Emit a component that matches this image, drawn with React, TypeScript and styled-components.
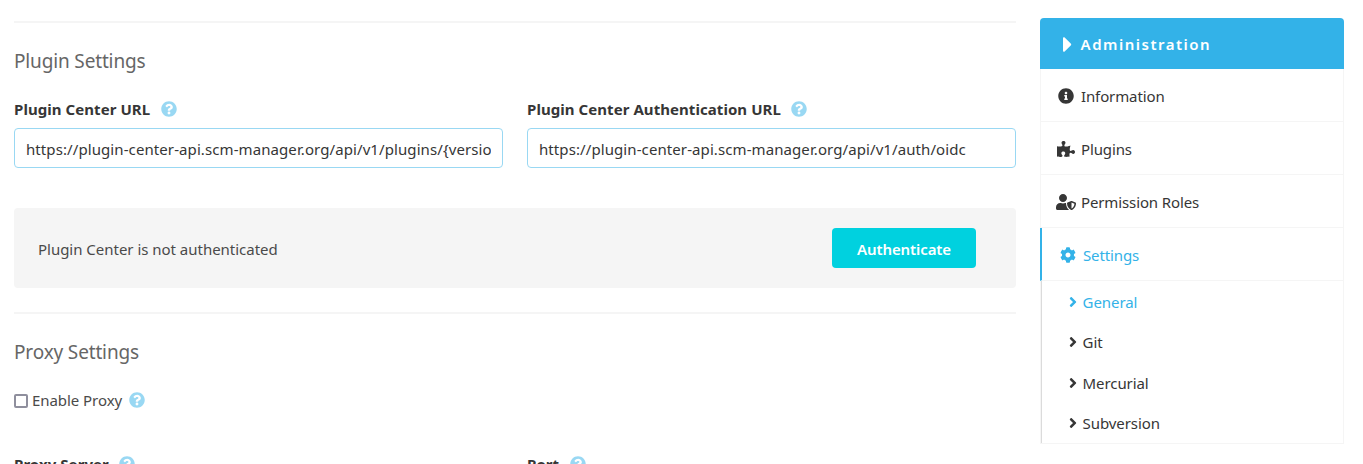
import React from "react";
import styled, { createGlobalStyle } from "styled-components";
import {
  FaAngleRight,
  FaCaretRight,
  FaCog,
  FaInfoCircle,
  FaPuzzlePiece,
  FaQuestionCircle,
  FaUserShield,
} from "react-icons/fa";

const GlobalStyle = createGlobalStyle`
  * { box-sizing: border-box; }
  body {
    margin: 0;
    background: #fff;
    color: #363636;
    font-family: "Noto Sans", "Open Sans", sans-serif;
    font-size: 15px;
    line-height: 24px;
    overflow: hidden;
  }
`;

const Page = styled.div`
  display: grid;
  grid-template-columns: 1002px 304px;
  column-gap: 24px;
  height: 464px;
  padding-left: 14px;
  overflow: hidden;
`;

const Main = styled.main`
  padding-top: 21px;
  white-space: nowrap;
`;

const Divider = styled.hr`
  height: 2px;
  margin: 0;
  border: 0;
  background: #f5f5f5;
`;

const Heading = styled.h3`
  margin: 0;
  padding-top: 23px;
  color: #666;
  font-size: 19px;
  font-weight: 400;
  line-height: 30px;
  letter-spacing: -0.15px;
`;

const Columns = styled.div<{ $top: number }>`
  display: grid;
  grid-template-columns: 1fr 1fr;
  column-gap: 24px;
  margin-top: ${(p) => p.$top}px;
`;

const Field = styled.div`
  min-width: 0;
`;

const Label = styled.label`
  display: flex;
  align-items: center;
  gap: 10.5px;
  height: 24px;
  font-weight: 700;
  letter-spacing: 0.06px;
`;

const Help = styled(FaQuestionCircle)`
  flex: none;
  width: 16px;
  height: 16px;
  color: #99d8f3;
`;

const TextInput = styled.input`
  display: block;
  width: 100%;
  height: 40px;
  margin-top: 7px;
  padding: 2px 11px 0;
  border: 1px solid #99d8f3;
  border-radius: 4px;
  background: #fff;
  color: #363636;
  font: inherit;
  letter-spacing: 0.09px;
`;

const Notice = styled.section`
  display: flex;
  align-items: center;
  justify-content: space-between;
  height: 80px;
  margin: 40px 0 24px;
  padding: 0 40px 0 24px;
  border-radius: 4px;
  background: #f5f5f5;
  color: #4a4a4a;
`;

const NoticeText = styled.span`
  padding-top: 2px;
  letter-spacing: -0.02px;
`;

const PrimaryButton = styled.button`
  width: 144px;
  height: 40px;
  padding: 2px 0 0;
  border: 0;
  border-radius: 4px;
  background: #00d1df;
  color: #fff;
  font: inherit;
  font-weight: 600;
  letter-spacing: -0.1px;
`;

const CheckRow = styled.label`
  display: flex;
  align-items: center;
  height: 24px;
  margin-top: 21px;
  color: #4a4a4a;
`;

const Checkbox = styled.input`
  appearance: none;
  width: 14px;
  height: 14px;
  margin: 1px 4px 0 0;
  border: 2px solid #8f8f9d;
  border-radius: 2px;
  background: #fff;
`;

const CheckText = styled.span`
  margin-right: 7px;
  letter-spacing: -0.06px;
`;

const Sidebar = styled.aside`
  padding-top: 18px;
  white-space: nowrap;
`;

const MenuTitle = styled.div`
  display: flex;
  align-items: center;
  height: 51px;
  padding: 1px 0 0 23px;
  border-radius: 4px 4px 0 0;
  background: #33b2e8;
  color: #fff;
  font-weight: 600;
  letter-spacing: 1.5px;

  svg {
    width: 9.4px;
    height: 25px;
    margin-right: 8.2px;
  }
`;

const MenuList = styled.nav`
  border: solid #f5f5f5;
  border-width: 0 1px 1px;
`;

const MenuItem = styled.a<{ $active?: boolean }>`
  display: flex;
  align-items: center;
  height: 53px;
  margin-left: ${(p) => (p.$active ? -1 : 0)}px;
  padding-top: 2px;
  padding-left: ${(p) => (p.$active ? 16 : 15)}px;
  border-left: ${(p) => (p.$active ? "2px solid #33b2e8" : "0")};
  border-bottom: 1px solid #f5f5f5;
  color: ${(p) => (p.$active ? "#33b2e8" : "#363636")};
  letter-spacing: -0.12px;
`;

const IconSlot = styled.span`
  display: flex;
  justify-content: center;
  width: 20px;
  margin-right: 5px;
`;

const SubMenu = styled.div`
  height: 162px;
  padding-top: 0.5px;
  border-left: 1px solid #dbdbdb;
`;

const SubItem = styled.a<{ $active?: boolean }>`
  display: flex;
  align-items: center;
  height: 40.5px;
  padding-left: 27px;
  color: ${(p) => (p.$active ? "#33b2e8" : "#363636")};
  letter-spacing: -0.08px;

  svg {
    width: 8px;
    height: 16px;
    margin-right: 5.6px;
  }
`;

const menuItems = [
  { name: "Information", icon: <FaInfoCircle size={16} /> },
  { name: "Plugins", icon: <FaPuzzlePiece size={18} /> },
  { name: "Permission Roles", icon: <FaUserShield size={20} /> },
  { name: "Settings", icon: <FaCog size={16} />, active: true },
];

const subItems = [
  { name: "General", active: true },
  { name: "Git" },
  { name: "Mercurial" },
  { name: "Subversion" },
];

export default function App() {
  return (
    <>
      <GlobalStyle />
      <Page>
        <Main>
          <Divider />
          <Heading>Plugin Settings</Heading>
          <Columns $top={21}>
            <Field>
              <Label>Plugin Center URL <Help /></Label>
              <TextInput readOnly value="https://plugin-center-api.scm-manager.org/api/v1/plugins/{version}" />
            </Field>
            <Field>
              <Label>Plugin Center Authentication URL <Help /></Label>
              <TextInput readOnly value="https://plugin-center-api.scm-manager.org/api/v1/auth/oidc" />
            </Field>
          </Columns>
          <Notice>
            <NoticeText>Plugin Center is not authenticated</NoticeText>
            <PrimaryButton>Authenticate</PrimaryButton>
          </Notice>
          <Divider />
          <Heading>Proxy Settings</Heading>
          <CheckRow>
            <Checkbox type="checkbox" />
            <CheckText>Enable Proxy</CheckText>
            <Help />
          </CheckRow>
          <Columns $top={40}>
            <Field><Label>Proxy Server <Help /></Label></Field>
            <Field><Label>Port <Help /></Label></Field>
          </Columns>
        </Main>
        <Sidebar>
          <MenuTitle><FaCaretRight />Administration</MenuTitle>
          <MenuList>
            {menuItems.map((item) => (
              <MenuItem key={item.name} $active={item.active}>
                <IconSlot>{item.icon}</IconSlot>
                {item.name}
              </MenuItem>
            ))}
            <SubMenu>
              {subItems.map((item) => (
                <SubItem key={item.name} $active={item.active}><FaAngleRight />{item.name}</SubItem>
              ))}
            </SubMenu>
          </MenuList>
        </Sidebar>
      </Page>
    </>
  );
}
